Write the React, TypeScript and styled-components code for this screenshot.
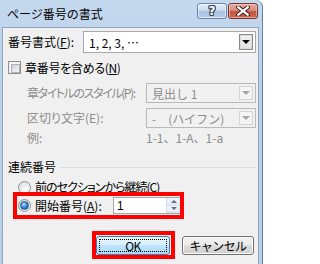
import React from "react";
import styled, { createGlobalStyle, css } from "styled-components";

const JP = `"Noto Sans CJK JP", "Noto Sans", sans-serif`;

const Global = createGlobalStyle`
  html, body { margin: 0; padding: 0; background: #ffffff; overflow: hidden; }
  body { font-family: ${JP}; font-size: 12px; }
  * { box-sizing: border-box; }
`;

const Window = styled.div`
  width: 263px;
  height: 270px;
  display: flex;
  flex-direction: column;
  padding: 0 3px 4px 2px;
  background: linear-gradient(180deg, #c4d8ee 0%, #bad1ea 30%, #b9d0e9 100%);
  border-right: 1px solid #62809f;
  border-top-right-radius: 7px;
`;

const TitleBar = styled.div`
  height: 27px;
  display: flex;
  align-items: flex-start;
  flex-shrink: 0;
`;

const TitleText = styled.div`
  font-family: ${JP};
  font-size: 12px;
  line-height: 16px;
  color: #000;
  margin: 6px 0 0 5px;
`;

const CaptionButtons = styled.div`
  margin: 3px 1px 0 auto;
  display: flex;
  gap: 1px;
`;

const CaptionButton = styled.div<{ $close?: boolean }>`
  width: 30px;
  height: 16px;
  border-radius: 3px;
  display: flex;
  align-items: center;
  justify-content: center;
  ${(p) =>
    p.$close
      ? css`
          border: 1px solid #6f3a33;
          background: linear-gradient(180deg, #e9a99c 0%, #d88f80 45%, #c3533f 55%, #cc6a52 100%);
          box-shadow: inset 0 0 0 1px rgba(255, 220, 210, 0.5);
        `
      : css`
          border: 1px solid #6d85a4;
          background: linear-gradient(180deg, #e3edf8 0%, #c9daee 45%, #a9c1df 55%, #b8cfe9 100%);
          box-shadow: inset 0 0 0 1px rgba(255, 255, 255, 0.55);
        `}
`;

const HelpGlyph = styled.span`
  font-family: "DejaVu Sans", sans-serif;
  font-weight: bold;
  font-size: 12px;
  line-height: 12px;
  color: #ffffff;
  text-shadow: 1px 0 0 #36485f, -1px 0 0 #36485f, 0 1px 0 #36485f, 0 -1px 0 #36485f,
    1px 1px 0 #36485f, -1px -1px 0 #36485f, 1px -1px 0 #36485f, -1px 1px 0 #36485f;
`;

const Client = styled.div`
  flex: 1;
  background: #f0f0f0;
  border: 1px solid #8fa4bd;
  display: flex;
  flex-direction: column;
  padding: 3px 1px 0 5px;
  font-family: ${JP};
  font-size: 12px;
  color: #000;
`;

const Row = styled.div<{ $h: number; $mt?: number; $indent?: number }>`
  display: flex;
  align-items: center;
  height: ${(p) => p.$h}px;
  margin-top: ${(p) => p.$mt ?? 0}px;
  padding-left: ${(p) => p.$indent ?? 0}px;
  flex-shrink: 0;
`;

const Label = styled.span<{ $w?: number; $disabled?: boolean; $ls?: number; $full?: boolean }>`
  white-space: nowrap;
  width: ${(p) => (p.$w ? `${p.$w}px` : "auto")};
  flex-shrink: 0;
  color: ${(p) => (p.$disabled ? "#8c8c8c" : "#000")};
  line-height: 14px;
  letter-spacing: ${(p) => p.$ls ?? 0}px;
  font-feature-settings: ${(p) => (p.$full ? "normal" : `"palt" 1`)};
`;

const U = styled.span`
  text-decoration: underline;
  text-underline-offset: 1px;
`;

const Combo = styled.div<{ $w: number; $h: number; $disabled?: boolean }>`
  width: ${(p) => p.$w}px;
  height: ${(p) => p.$h}px;
  display: flex;
  align-items: stretch;
  border: 1px solid ${(p) => (p.$disabled ? "#b9b9b9" : "#a4a9b1")};
  background: ${(p) => (p.$disabled ? "#f1f1f1" : "#ffffff")};
  color: ${(p) => (p.$disabled ? "#8c8c8c" : "#000")};
  padding: 1px;
`;

const ComboText = styled.div`
  flex: 1;
  display: flex;
  align-items: center;
  padding-left: 4px;
  white-space: nowrap;
`;

const DropButton = styled.div<{ $disabled?: boolean }>`
  width: 14px;
  margin: 1px 1px 1px 0;
  display: flex;
  align-items: center;
  justify-content: center;
  ${(p) =>
    p.$disabled
      ? css`
          border: 1px solid #d4d4d4;
          background: #f4f4f4;
        `
      : css`
          border: 1px solid #8a8a8a;
          box-shadow: inset 0 0 0 1px #d8d8d8;
          background: linear-gradient(180deg, #f2f2f2, #e0e0e0);
        `}
`;

const Tri = styled.div<{ $color: string }>`
  width: 0;
  height: 0;
  border-left: 4px solid transparent;
  border-right: 4px solid transparent;
  border-top: 4px solid ${(p) => p.$color};
`;

const CheckBox = styled.div`
  width: 13px;
  height: 13px;
  border: 1px solid #8e8f8f;
  background: #f4f4f4;
  padding: 2px;
  margin: 0 4px 0 0;
  flex-shrink: 0;
  &::after {
    content: "";
    display: block;
    width: 7px;
    height: 7px;
    border: 1px solid #aeb3b9;
    background: linear-gradient(135deg, #cbcfd5 0%, #e6e8eb 60%, #f7f7f8 100%);
  }
`;

const GroupHeader = styled.div`
  display: flex;
  align-items: center;
  height: 14px;
  margin-top: 15px;
  gap: 4px;
  flex-shrink: 0;
`;

const GroupLine = styled.div`
  flex: 1;
  height: 1px;
  background: #d5dfe5;
  margin-right: 1px;
`;

const Radio = styled.div<{ $on?: boolean }>`
  width: 13px;
  height: 13px;
  border-radius: 50%;
  border: 1px solid #8e8f8f;
  background: radial-gradient(circle at 65% 70%, #ffffff 0%, #e6e6e6 60%, #d4d4d4 100%);
  display: flex;
  align-items: center;
  justify-content: center;
  margin-right: 4px;
  flex-shrink: 0;
  ${(p) =>
    p.$on &&
    css`
      &::after {
        content: "";
        width: 7px;
        height: 7px;
        border-radius: 50%;
        background: radial-gradient(circle at 40% 35%, #b9e4ff 0%, #3b8bd6 45%, #0d4f9a 100%);
        border: 1px solid #1c5b9a;
      }
    `}
`;

const RedFrame = styled.div<{ $w: number; $h: number }>`
  width: ${(p) => p.$w}px;
  height: ${(p) => p.$h}px;
  border: 4px solid #ff0000;
  display: flex;
  align-items: center;
  flex-shrink: 0;
  overflow: hidden;
`;

const Spin = styled.div`
  width: 68px;
  height: 17px;
  margin-left: auto;
  margin-right: -1px;
  border: 1px solid #a4a9b1;
  background: #fff;
  display: flex;
`;

const SpinText = styled.div`
  flex: 1;
  padding-left: 3px;
  display: flex;
  align-items: center;
  font-family: "Liberation Sans", sans-serif;
  font-size: 12px;
`;

const SpinButtons = styled.div`
  width: 14px;
  display: flex;
  flex-direction: column;
  border-left: 1px solid #d4dbe3;
`;

const SpinHalf = styled.div`
  flex: 1;
  display: flex;
  align-items: center;
  justify-content: center;
  background: linear-gradient(180deg, #f4f7fa, #e4eaf1);
  border-bottom: 1px solid #d9e0e8;
`;

const SpinTri = styled.div<{ $up?: boolean }>`
  width: 0;
  height: 0;
  border-left: 3px solid transparent;
  border-right: 3px solid transparent;
  ${(p) => (p.$up ? "border-bottom" : "border-top")}: 3px solid #5b6f95;
`;

const ButtonRow = styled.div`
  display: flex;
  align-items: center;
  margin-top: 12px;
  padding-left: 84px;
  flex-shrink: 0;
`;

const PushButton = styled.div<{ $default?: boolean }>`
  width: ${(p) => (p.$default ? 74 : 72)}px;
  height: 19px;
  border-radius: 3px;
  display: flex;
  align-items: center;
  justify-content: center;
  position: relative;
  font-size: 12px;
  letter-spacing: -0.6px;
  ${(p) =>
    p.$default
      ? css`
          border: 1px solid #3c7fb1;
          background: linear-gradient(180deg, #eaf6fd 0%, #d9f0fc 45%, #bee6fd 50%, #a7d9f5 100%);
          &::after {
            content: "";
            position: absolute;
            inset: 2px;
            border: 1px dotted #000;
          }
        `
      : css`
          border: 1px solid #707070;
          background: linear-gradient(180deg, #f2f2f2 0%, #ebebeb 45%, #dddddd 50%, #cfcfcf 100%);
          box-shadow: inset 0 0 0 1px #fcfcfc;
        `}
`;

const Gap = styled.div<{ $w: number }>`
  width: ${(p) => p.$w}px;
  flex-shrink: 0;
`;

export default function App() {
  return (
    <>
      <Global />
      <Window>
        <TitleBar>
          <TitleText>ページ番号の書式</TitleText>
          <CaptionButtons>
            <CaptionButton>
              <HelpGlyph>?</HelpGlyph>
            </CaptionButton>
            <CaptionButton $close>
              <svg width="14" height="10" viewBox="0 0 14 10">
                <path d="M2 1 L12 9 M12 1 L2 9" stroke="#4a1f1a" strokeWidth="4.2" strokeLinecap="square" />
                <path d="M2.3 1.3 L11.7 8.7 M11.7 1.3 L2.3 8.7" stroke="#ffffff" strokeWidth="2.2" strokeLinecap="square" />
              </svg>
            </CaptionButton>
          </CaptionButtons>
        </TitleBar>
        <Client>
          <Row $h={22}>
            <Label $w={75}>
              番号書式(<U>F</U>):
            </Label>
            <Combo $w={173} $h={22}>
              <ComboText>1, 2, 3, …</ComboText>
              <DropButton>
                <Tri $color="#000" />
              </DropButton>
            </Combo>
          </Row>
          <Row $h={15} $mt={7}>
            <CheckBox />
            <Label $ls={-0.3}>
              章番号を含める(<U>N</U>)
            </Label>
          </Row>
          <Row $h={20} $mt={8} $indent={19}>
            <Label $w={119} $disabled $ls={-1.4}>
              章タイトルのスタイル(P):
            </Label>
            <Combo $w={110} $h={20} $disabled>
              <ComboText>見出し 1</ComboText>
              <DropButton $disabled>
                <Tri $color="#a6a6a6" />
              </DropButton>
            </Combo>
          </Row>
          <Row $h={20} $mt={5} $indent={19}>
            <Label $w={119} $disabled>
              区切り文字(E):
            </Label>
            <Combo $w={110} $h={20} $disabled>
              <ComboText>-　(ハイフン)</ComboText>
              <DropButton $disabled>
                <Tri $color="#a6a6a6" />
              </DropButton>
            </Combo>
          </Row>
          <Row $h={14} $mt={3} $indent={19}>
            <Label $w={119} $disabled>
              例:
            </Label>
            <Label $disabled $full>
              1-1、1-A、1-a
            </Label>
          </Row>
          <GroupHeader>
            <Label>連続番号</Label>
            <GroupLine />
          </GroupHeader>
          <Row $h={14} $mt={6} $indent={10}>
            <Radio />
            <Label $ls={-1}>
              前のセクションから継続(<U>C</U>)
            </Label>
          </Row>
          <Row $h={27} $mt={-2} $indent={5}>
            <RedFrame $w={171} $h={27}>
              <Gap $w={1} />
              <Radio $on />
              <Label>
                開始番号(<U>A</U>):
              </Label>
              <Spin>
                <SpinText>1</SpinText>
                <SpinButtons>
                  <SpinHalf>
                    <SpinTri $up />
                  </SpinHalf>
                  <SpinHalf>
                    <SpinTri />
                  </SpinHalf>
                </SpinButtons>
              </Spin>
            </RedFrame>
          </Row>
          <ButtonRow>
            <RedFrame $w={83} $h={28}>
              <PushButton $default>OK</PushButton>
            </RedFrame>
            <Gap $w={7} />
            <PushButton>キャンセル</PushButton>
          </ButtonRow>
        </Client>
      </Window>
    </>
  );
}
